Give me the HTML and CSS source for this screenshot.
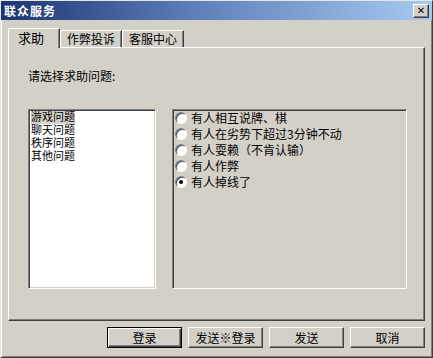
FILE: index.html
```html
<!DOCTYPE html>
<html lang="zh">

<head>
    <meta charset="UTF-8">
    <title>联众服务</title>
    <link rel="stylesheet" href="styles.css">
</head>

<body>
    <div class="window">
        <div class="titlebar">
            <span class="title">联众服务</span>
            <span class="close_btn">✕</span>
        </div>
        <div class="tabs">
            <div class="tab active">求助</div>
            <div class="tab">作弊投诉</div>
            <div class="tab">客服中心</div>
        </div>
        <div class="panel">
            <div class="label">请选择求助问题:</div>
            <div class="row">
                <div class="listbox">
                    <div class="item"><span class="selected">游戏问题</span></div>
                    <div class="item">聊天问题</div>
                    <div class="item">秩序问题</div>
                    <div class="item">其他问题</div>
                </div>
                <div class="group">
                    <div class="radio"><span class="dot"></span>有人相互说牌、棋</div>
                    <div class="radio"><span class="dot"></span>有人在劣势下超过3分钟不动</div>
                    <div class="radio"><span class="dot"></span>有人耍赖（不肯认输）</div>
                    <div class="radio"><span class="dot"></span>有人作弊</div>
                    <div class="radio"><span class="dot checked"></span>有人掉线了</div>
                </div>
            </div>
        </div>
        <div class="buttons">
            <div class="btn default">登录</div>
            <div class="btn">发送※登录</div>
            <div class="btn">发送</div>
            <div class="btn">取消</div>
        </div>
    </div>
</body>

</html>
```

FILE: styles.css
```css
body {
    margin: 0;
    padding: 0;
    width: 433px;
    height: 358px;
    overflow: hidden;
    background-color: #d4d0c8;
    font-family: "Noto Sans CJK SC", "Liberation Sans", sans-serif;
    font-size: 12px;
    color: #000;
}

.window {
    box-sizing: border-box;
    width: 433px;
    height: 358px;
    border: 1px solid;
    border-color: #e8e6e0 #404040 #404040 #e8e6e0;
    box-shadow: inset 1px 1px #fff, inset -1px -1px #808080;
    display: flex;
    flex-direction: column;
}

.titlebar {
    display: flex;
    align-items: center;
    justify-content: space-between;
    height: 19px;
    padding: 0 3px 0 3px;
    background-image: linear-gradient(90deg, #1c3474, #5d7fba 45%, #a6caf0);
}

.title {
    color: #fff;
    font-weight: bold;
    font-size: 12px;
    letter-spacing: 1px;
}

.close_btn {
    box-sizing: border-box;
    width: 16px;
    height: 14px;
    margin-top: 1px;
    display: flex;
    justify-content: center;
    align-items: center;
    font-family: "DejaVu Sans", sans-serif;
    font-size: 10px;
    font-weight: bold;
    line-height: 1;
    background-color: #d4d0c8;
    border: 1px solid;
    border-color: #fff #404040 #404040 #fff;
    box-shadow: inset -1px -1px #808080;
}

.tabs {
    display: flex;
    align-items: flex-end;
    margin: 8px 0 0 7px;
    height: 19px;
    position: relative;
    z-index: 1;
}

.tab {
    box-sizing: border-box;
    height: 17px;
    padding: 0 6px;
    line-height: 15px;
    border: 1px solid;
    border-bottom: none;
    border-color: #fff #404040 transparent #fff;
    box-shadow: inset -1px 0 #808080;
    background-color: #d4d0c8;
}

.tab.active {
    height: 20px;
    width: 52px;
    margin-bottom: -1px;
    padding: 0 0 0 9px;
    line-height: 17px;
    font-size: 13px;
}

.panel {
    box-sizing: border-box;
    height: 274px;
    margin: 0 7px 0 7px;
    padding: 21px 17px 0 19px;
    border: 1px solid;
    border-color: #fff #404040 #404040 #fff;
    box-shadow: inset -1px -1px #808080;
}

.label {
    height: 14px;
    line-height: 14px;
    margin-bottom: 26px;
}

.row {
    display: flex;
    gap: 16px;
}

.listbox {
    box-sizing: border-box;
    width: 128px;
    height: 180px;
    background-color: #fff;
    padding: 1px 0 0 2px;
    border: 1px solid;
    border-color: #808080 #fff #fff #808080;
    box-shadow: inset 1px 1px #404040, inset -1px -1px #d4d0c8;
    font-family: "Liberation Sans", "Noto Sans CJK SC", sans-serif;
    font-size: 11px;
}

.item {
    height: 13px;
    line-height: 13px;
}

.selected {
    display: inline-block;
    height: 13px;
    background-color: #d4d0c8;
}

.group {
    box-sizing: border-box;
    width: 235px;
    height: 180px;
    padding: 0 0 0 2px;
    border: 1px solid;
    border-color: #808080 #fff #fff #808080;
    box-shadow: inset 1px 1px #404040, inset -1px -1px #d4d0c8;
}

.radio {
    display: flex;
    align-items: center;
    height: 16px;
    line-height: 16px;
}

.dot {
    box-sizing: border-box;
    width: 12px;
    height: 12px;
    margin-right: 4px;
    border-radius: 50%;
    background-color: #fff;
    border: 1px solid;
    border-color: #808080 #fff #fff #808080;
    box-shadow: inset 1px 1px #404040;
    display: flex;
    justify-content: center;
    align-items: center;
}

.dot.checked::after {
    content: "";
    width: 4px;
    height: 4px;
    border-radius: 50%;
    background-color: #000;
}

.buttons {
    display: flex;
    justify-content: flex-end;
    gap: 6px;
    margin: 6px 7px 0 0;
}

.btn {
    box-sizing: border-box;
    width: 75px;
    height: 21px;
    display: flex;
    justify-content: center;
    align-items: center;
    border: 1px solid;
    border-color: #fff #404040 #404040 #fff;
    box-shadow: inset -1px -1px #808080;
}

.btn.default {
    border: 1px solid #000;
    box-shadow: inset 1px 1px #fff, inset -1px -1px #404040, inset -2px -2px #808080;
}
```
